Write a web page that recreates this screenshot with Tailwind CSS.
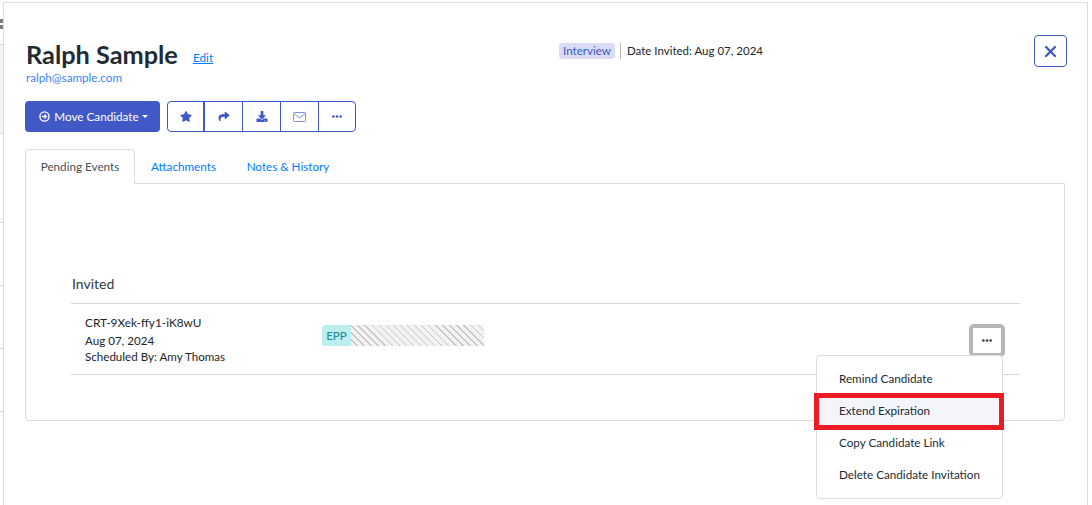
<!DOCTYPE html>
<html lang="en">
<head>
    <meta charset="UTF-8">
    <meta name="viewport" content="width=device-width, initial-scale=1.0">
    <title>Ralph Sample</title>
    <script src="https://cdn.jsdelivr.net/npm/@tailwindcss/browser@4"></script>
</head>
<body class="bg-white font-['Lato',sans-serif] text-[#212529] overflow-hidden">

<div class="flex h-[505px] w-[1092px]">
    <!-- page behind the modal -->
    <div class="w-[3px] shrink-0 pt-[19px]">
        <div class="h-[4px] w-[3px] bg-[#7a7f84]"></div>
        <div class="mt-[2px] h-[4px] w-[3px] bg-[#7a7f84]"></div>
        <div class="mt-[15px] h-[90px] border-y border-[#d8d8d8] bg-[#f5f5f5]"></div>
        <div class="h-[89px] border-b border-[#d8d8d8]"></div>
        <div class="h-[63px] border-b border-[#d8d8d8]"></div>
        <div class="h-[63px] border-b border-[#d8d8d8]"></div>
        <div class="h-[63px] border-b border-[#d8d8d8]"></div>
    </div>

    <!-- modal -->
    <div class="mt-[2px] w-[1085px] shrink-0 border border-[#dcdcdc] border-b-0 pl-[21px] pr-[20px] pt-[32px]">
        <div class="flex items-start">
            <div class="w-[534px]">
                <div class="flex h-[40px] items-center">
                    <h1 class="ml-px text-[25.3px] font-bold leading-none text-[#212b36]">Ralph Sample</h1>
                    <a class="ml-[15px] mt-[6px] text-[11.8px] leading-none text-[#007bff] underline">Edit</a>
                </div>
                <a class="ml-px -mt-[5px] block text-[11.7px] leading-[14px] text-[#3b82f6]">ralph@sample.com</a>
            </div>
            <div class="mt-[8px] flex items-center">
                <span class="rounded-[4px] bg-[#d9dcf3] px-[4px] py-[1px] text-[11.6px] leading-[14px] text-[#4059c6]">Interview</span>
                <span class="ml-[5px] mr-[6px] h-[16px] w-px bg-[#b9b9b9]"></span>
                <span class="text-[11.5px] leading-[16px]">Date Invited: Aug 07, 2024</span>
            </div>
            <button class="ml-auto flex h-[32px] w-[33px] items-center justify-center rounded-[4px] border border-[#4059c6] text-[#4059c6]">
                <svg class="h-[13px] w-[13px]" viewBox="0 0 13 13" fill="none" stroke="currentColor" stroke-width="2.3" stroke-linecap="round"><path d="M2 2l9 9M11 2l-9 9"/></svg>
            </button>
        </div>

        <div class="mt-[17px] flex">
            <button class="flex h-[31px] w-[135px] items-center justify-center rounded-[4px] bg-[#4059c6] pl-[2px] text-[11.7px] text-white">
                <svg class="mr-[4px] h-[11px] w-[11px]" viewBox="0 0 12 12" fill="none" stroke="currentColor" stroke-width="1.5"><circle cx="6" cy="6" r="5"/><path d="M3.2 6h5M6 3.8L8.2 6 6 8.2"/></svg>
                Move Candidate
                <span class="ml-[3px] h-0 w-0 border-x-[3px] border-t-[3px] border-x-transparent border-t-white"></span>
            </button>
            <div class="ml-[7px] flex h-[31px] overflow-hidden rounded-[4px] border border-[#4059c6] text-[#4059c6]">
                <button class="flex w-[37px] items-center justify-center border-r-2 border-[#4059c6]">
                    <svg class="h-[11px] w-[12px]" viewBox="0 0 576 512" fill="currentColor"><path d="M259.3 17.8L194 150.2 47.9 171.5c-26.2 3.8-36.7 36.1-17.7 54.6l105.7 103-25 145.5c-4.5 26.3 23.2 46 46.4 33.7L288 439.6l130.7 68.7c23.2 12.2 50.9-7.4 46.4-33.7l-25-145.5 105.7-103c19-18.5 8.5-50.8-17.7-54.6L382 150.2 316.7 17.8c-11.7-23.6-45.6-23.9-57.4 0z"/></svg>
                </button>
                <button class="flex w-[38px] items-center justify-center border-r border-[#4059c6]">
                    <svg class="h-[11px] w-[12px]" viewBox="0 0 512 512" fill="currentColor"><path d="M503.691 189.836L327.687 37.851C312.281 24.546 288 35.347 288 56.015v80.053C127.371 137.907 0 170.1 0 322.326c0 61.441 39.581 122.309 83.333 154.132 13.653 9.931 33.111-2.533 28.077-18.631C66.066 312.814 132.917 274.316 288 272.085V360c0 20.7 24.3 31.453 39.687 18.164l176.004-152c11.071-9.562 11.086-26.753 0-36.328z"/></svg>
                </button>
                <button class="flex w-[38px] items-center justify-center border-r border-[#4059c6]">
                    <svg class="h-[11px] w-[12px]" viewBox="0 0 512 512" fill="currentColor"><path d="M216 0h80c13.3 0 24 10.7 24 24v168h87.7c17.8 0 26.7 21.5 14.1 34.1L269.7 378.3c-7.5 7.5-19.8 7.5-27.3 0L90.1 226.1c-12.6-12.6-3.7-34.1 14.1-34.1H192V24c0-13.3 10.7-24 24-24zm296 376v112c0 13.3-10.7 24-24 24H24c-13.3 0-24-10.7-24-24V376c0-13.3 10.7-24 24-24h146.7l49 49c20.1 20.1 52.5 20.1 72.6 0l49-49H488c13.3 0 24 10.7 24 24zm-124 88c0-11-9-20-20-20s-20 9-20 20 9 20 20 20 20-9 20-20zm64 0c0-11-9-20-20-20s-20 9-20 20 9 20 20 20 20-9 20-20z"/></svg>
                </button>
                <button class="flex w-[38px] items-center justify-center border-r border-[#4059c6]">
                    <svg class="h-[10px] w-[13px]" viewBox="0 0 13 10" fill="none" stroke="#7f8fdc" stroke-width="1"><rect x=".5" y=".5" width="12" height="9" rx="1"/><path d="M.8 1.5L6.5 6l5.7-4.5"/></svg>
                </button>
                <button class="flex w-[36px] items-center justify-center">
                    <svg class="h-[3px] w-[10px]" viewBox="0 0 10 3" fill="currentColor"><circle cx="1.4" cy="1.5" r="1.3"/><circle cx="5" cy="1.5" r="1.3"/><circle cx="8.6" cy="1.5" r="1.3"/></svg>
                </button>
            </div>
        </div>

        <!-- tabs -->
        <div class="relative z-10 mt-[17px] flex h-[35px] text-[11.7px]">
            <div class="flex h-[35px] w-[110px] items-center justify-center rounded-t-[4px] border border-b-0 border-[#dcdcdc] bg-white text-[#495057]">Pending Events</div>
            <div class="flex w-[97px] items-center justify-center text-[#007bff]">Attachments</div>
            <div class="flex w-[112px] items-center justify-center text-[#007bff]">Notes &amp; History</div>
        </div>

        <div class="relative -mt-px h-[238px] w-[1040px] rounded-b-[4px] border border-[#dcdcdc] pl-[45px] pr-[44px] pt-[91px]">
            <h2 class="ml-px text-[14px] leading-[18px] text-[#343a40]">Invited</h2>
            <div class="mt-[10px] flex h-[72px] items-center border-y border-[#d8d8d8] pl-[14px]">
                <div class="w-[237px] text-[11.6px]">
                    <div class="text-[11.8px] leading-[15px]">CRT-9Xek-ffy1-iK8wU</div>
                    <div class="mt-[3px] leading-[15px]">Aug 07, 2024</div>
                    <div class="mt-[1px] leading-[15px]">Scheduled By: Amy Thomas</div>
                </div>
                <div class="-mt-[7px] flex h-[21px] w-[162px]">
                    <span class="flex w-[29px] items-center justify-center rounded-l-[3px] bg-[#bceef0] text-[11.6px] font-medium text-[#1d8f9a]">EPP</span>
                    <span class="flex-1 bg-[#f2f2f2] bg-[repeating-linear-gradient(45deg,#f2f2f2_0px,#f2f2f2_4px,#c6c6c6_4px,#c6c6c6_5px)]"></span>
                </div>
                <button class="mt-[2px] ml-auto mr-[15px] flex h-[33px] w-[36px] items-center justify-center rounded-[5px] border-[4px] border-[#b4b8bb] bg-white text-[#343a40]">
                    <svg class="h-[3px] w-[10px]" viewBox="0 0 10 3" fill="currentColor"><circle cx="1.4" cy="1.5" r="1.3"/><circle cx="5" cy="1.5" r="1.3"/><circle cx="8.6" cy="1.5" r="1.3"/></svg>
                </button>
            </div>

            <!-- dropdown menu -->
            <div class="absolute left-[790px] top-[171px] z-20 w-[187px] rounded-[4px] border border-[#dcdcdc] bg-white py-[7px] text-[11.7px] text-[#212b36]">
                <div class="flex h-[32px] items-center pl-[22px]">Remind Candidate</div>
                <div class="flex h-[32px] items-center bg-[#f4f5fb] pl-[22px]">Extend Expiration</div>
                <div class="flex h-[32px] items-center pl-[22px]">Copy Candidate Link</div>
                <div class="flex h-[32px] items-center pl-[22px]">Delete Candidate Invitation</div>
            </div>
            <!-- red highlight over the menu item -->
            <div class="absolute left-[788px] top-[209px] z-30 h-[37px] w-[190px] border-[5px] border-[#ed1c24]"></div>
        </div>
    </div>
</div>

</body>
</html>
